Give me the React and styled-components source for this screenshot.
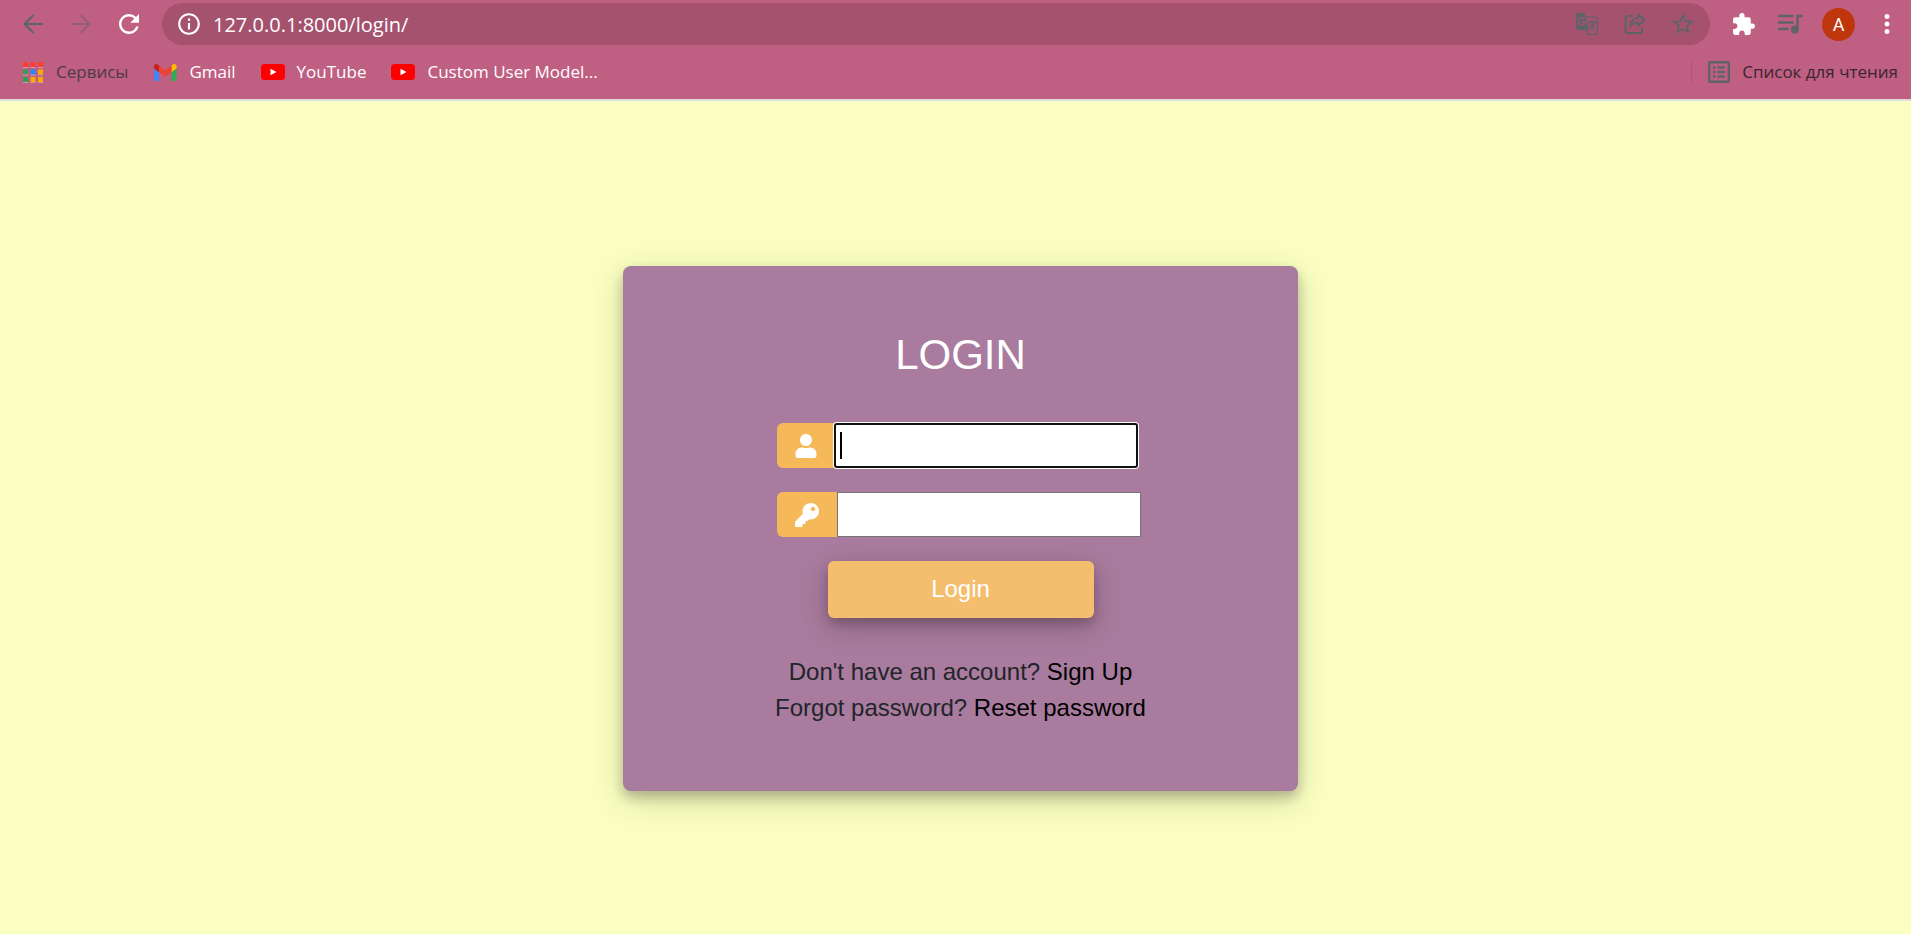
import React from "react";
import styled, { createGlobalStyle } from "styled-components";
import {
  MdRefresh,
  MdInfoOutline,
  MdStarOutline,
  MdExtension,
  MdMoreVert,
} from "react-icons/md";
import { FaUser, FaKey } from "react-icons/fa";

const GlobalStyle = createGlobalStyle`
  *, *::before, *::after { box-sizing: border-box; }
  body {
    margin: 0;
    background: #faffc1;
    font-family: "Liberation Sans", Arial, sans-serif;
  }
`;

const Page = styled.div`
  min-height: 100vh;
  display: flex;
  flex-direction: column;
`;

const Chrome = styled.header`
  background: #bf5f82;
  border-bottom: 2px solid #dedce0;
  padding-bottom: 3px;
  font-family: "Open Sans", "Noto Sans", sans-serif;
  color: #fff;
`;

const ToolBar = styled.div`
  display: flex;
  align-items: center;
  height: 48px;
  padding: 0 9px 0 18px;
`;

const IconButton = styled.button`
  display: flex;
  align-items: center;
  justify-content: center;
  flex: none;
  width: 30px;
  height: 30px;
  padding: 0;
  border: 0;
  background: none;
  color: ${(p) => p.$color || "#fff"};
`;

const NavButtons = styled.nav`
  display: flex;
  gap: 18px;
  margin-right: 18px;
`;

const AddressBar = styled.div`
  display: flex;
  align-items: center;
  flex: 1;
  height: 42px;
  padding: 0 12px;
  border-radius: 21px;
  background: #a5526f;
`;

const AddressInput = styled.input`
  flex: 1;
  min-width: 0;
  margin-left: 9px;
  padding: 0;
  border: 0;
  outline: 0;
  background: none;
  color: #fff;
  font: 20px "Open Sans", "Noto Sans", sans-serif;
`;

const AddressActions = styled.div`
  display: flex;
  gap: 18px;
`;

const BrowserActions = styled.div`
  display: flex;
  align-items: center;
  gap: 17px;
  margin-left: 18px;
`;

const Avatar = styled.button`
  width: 33px;
  height: 33px;
  padding: 0;
  border: 0;
  border-radius: 50%;
  background: #bf360c;
  color: #fff;
  font: 18px Roboto, sans-serif;
`;

const BookmarksBar = styled.nav`
  display: flex;
  align-items: center;
  gap: 25px;
  height: 48px;
  padding: 0 13px 0 22px;
`;

const Bookmark = styled.a`
  display: flex;
  align-items: center;
  gap: 12px;
  color: ${(p) => p.$color || "#fff"};
  font-size: 17px;
  line-height: 24px;
  text-decoration: none;
  white-space: nowrap;
`;

const ReadingList = styled.div`
  display: flex;
  margin-left: auto;
  padding-left: 16px;
  border-left: 1px solid #ad5a78;
`;

const Main = styled.main`
  display: flex;
  flex: 1;
  justify-content: center;
  align-items: flex-start;
  padding: 165px 0 24px 10px;
`;

const Card = styled.section`
  display: flex;
  flex-direction: column;
  align-items: center;
  width: 675px;
  max-width: 100%;
  padding: 63px 24px 65px;
  border-radius: 8px;
  background: #a97b9e;
  box-shadow: 0 6px 12px rgba(0, 0, 0, 0.2), 0 9px 30px rgba(0, 0, 0, 0.19);
`;

const Title = styled.h1`
  margin: 0 0 43px;
  color: #fff;
  font-size: 42px;
  font-weight: 400;
  line-height: 51px;
`;

const Form = styled.form`
  display: flex;
  flex-direction: column;
  gap: 24px;
  width: 367px;
`;

const Field = styled.div`
  display: flex;
  height: 45px;
`;

const FieldIcon = styled.label`
  display: flex;
  align-items: center;
  justify-content: center;
  flex: none;
  width: ${(p) => p.$width}px;
  border-radius: 6px 0 0 6px;
  background: #f6b95a;
  color: #fff;
`;

const InputWrap = styled.div`
  position: relative;
  width: 304px;
`;

const TextInput = styled.input`
  width: 100%;
  height: 100%;
  padding: 0 4px;
  border: 1px solid #767676;
  border-radius: 0;
  outline: 0;
  background: #fff;
  caret-color: transparent;
  font: 24px "Liberation Sans", Arial, sans-serif;

  &:focus {
    border: 2px solid #101010;
    border-radius: 3px;
    box-shadow: 0 0 0 1px #fff;
  }
`;

const Caret = styled.span`
  position: absolute;
  top: 9px;
  left: 6px;
  width: 2px;
  height: 27px;
  background: #000;
`;

const SubmitButton = styled.button`
  align-self: center;
  width: 266px;
  height: 57px;
  padding: 0 0 1px;
  border: 0;
  border-radius: 6px;
  background: #f5be6e;
  color: #fff;
  font: 24px "Liberation Sans", Arial, sans-serif;
  box-shadow: 0 6px 12px rgba(0, 0, 0, 0.2), 0 9px 30px rgba(0, 0, 0, 0.19);
`;

const Prompts = styled.div`
  margin-top: 36px;
  color: #212529;
  font-size: 24px;
  line-height: 36px;
  text-align: center;
`;

const Prompt = styled.p`
  margin: 0;
`;

const PromptLink = styled.a`
  color: #000;
  text-decoration: none;
`;

const ArrowIcon = ({ forward }) => (
  <svg width="20" height="20" viewBox="0 0 20 20" fill="none" stroke="currentColor" strokeWidth="2.2">
    <path d={forward ? "M0 10H18.5M9.5 1L18.5 10L9.5 19" : "M20 10H1.5M10.5 1L1.5 10L10.5 19"} />
  </svg>
);

const TranslateIcon = () => (
  <svg width="22" height="22" viewBox="0 0 22 22">
    <path d="M2 0H8.500L13 17H2Q0 17 0 15V2Q0 0 2 0Z" fill="#5f6368" />
    <path d="M10 4H19.500Q21.400 4 21.400 6V19.500Q21.400 21.400 19.500 21.400H12L10.500 17" fill="none" stroke="#5f6368" strokeWidth="1.200" />
    <path d="M8 6.200A3.400 3.400 0 1 0 8.800 9H6" fill="none" stroke="#a5526f" strokeWidth="1.400" />
    <path d="M12 9H19.500M15.700 7.500V9M18.300 9Q17.500 12.500 13.500 16M14 10.500Q15.500 14 19 16.500" fill="none" stroke="#5f6368" strokeWidth="1.300" />
  </svg>
);

const ShareIcon = () => (
  <svg width="22" height="22" viewBox="0 0 22 22" fill="none" stroke="#5f6368" strokeWidth="2" strokeLinejoin="round">
    <path d="M9 3H4Q1.500 3 1.500 5.500V17.500Q1.500 20 4 20H15.500Q18 20 18 17.500V15" />
    <path d="M14 1.500L20.500 7L14 12.500V9.500Q9 9.500 6 13.500Q7 5.500 14 4.800Z" />
  </svg>
);

const QueueIcon = () => (
  <svg width="25" height="20" viewBox="0 0 25 20" fill="none" stroke="currentColor" strokeWidth="2.300">
    <path d="M0 2H15.500M0 8.500H15.500M0 15H10.500M19.500 15V2H24.500" />
    <circle cx="16.800" cy="15.500" r="3.900" fill="currentColor" stroke="none" />
  </svg>
);

const ListIcon = () => (
  <svg width="22" height="22" viewBox="0 0 22 22" fill="none" stroke="#5f6368" strokeWidth="2.400">
    <rect x="1.200" y="1.200" width="19.600" height="19.600" rx="1" />
    <path d="M5 6.500H7.500M9.500 6.500H17M5 11H7.500M9.500 11H17M5 15.500H7.500M9.500 15.500H17" />
  </svg>
);

const AppsIcon = () => {
  const rows = [
    ["#ff3d2e", "#ff3d2e", "#ff3d2e"],
    ["#34a04f", "#1a8cff", "#f9ab00"],
    ["#34a04f", "#f9ab00", "#f9ab00"],
  ];
  return (
    <svg width="22" height="22" viewBox="0 0 22 22">
      {rows.map((row, y) =>
        row.map((fill, x) => (
          <g key={`${x}-${y}`}>
            <rect x={1 + x * 7.5} y={1 + y * 7.5} width="5" height="5" fill={fill} />
            <rect x={1 + x * 7.5} y={6 + y * 7.5} width="5" height="1" fill="#d19bae" />
          </g>
        ))
      )}
    </svg>
  );
};

const GmailIcon = () => (
  <svg width="24" height="17" viewBox="50 42 90 66">
    <path fill="#4285f4" d="M58 108h14V74L52 59v43c0 3.320 2.690 6 6 6" />
    <path fill="#34a853" d="M120 108h14c3.320 0 6-2.690 6-6V59l-20 15" />
    <path fill="#fbbc04" d="M120 48v26l20-15v-8c0-7.420-8.470-11.650-14.400-7.200" />
    <path fill="#ea4335" d="M72 74V48l24 18 24-18v26L96 92" />
    <path fill="#c5221f" d="M52 51v8l20 15V48l-5.600-4.200c-5.940-4.450-14.400-.220-14.400 7.200" />
  </svg>
);

const YouTubeIcon = () => (
  <svg width="24" height="16" viewBox="0 0 24 16">
    <rect width="24" height="16" rx="3.500" fill="#f00" />
    <path d="M9.500 4.800L15.500 8L9.500 11.200Z" fill="#fff" />
  </svg>
);

export default function App() {
  return (
    <Page>
      <GlobalStyle />
      <Chrome>
        <ToolBar>
          <NavButtons aria-label="Navigation">
            <IconButton $color="#5f6368" aria-label="Back"><ArrowIcon /></IconButton>
            <IconButton $color="#945f72" aria-label="Forward"><ArrowIcon forward /></IconButton>
            <IconButton aria-label="Reload"><MdRefresh size={30} /></IconButton>
          </NavButtons>
          <AddressBar>
            <IconButton aria-label="Site information"><MdInfoOutline size={26} /></IconButton>
            <AddressInput aria-label="Address" defaultValue="127.0.0.1:8000/login/" />
            <AddressActions>
              <IconButton aria-label="Translate"><TranslateIcon /></IconButton>
              <IconButton aria-label="Share"><ShareIcon /></IconButton>
              <IconButton $color="#5f6368" aria-label="Bookmark"><MdStarOutline size={26} /></IconButton>
            </AddressActions>
          </AddressBar>
          <BrowserActions>
            <IconButton aria-label="Extensions"><MdExtension size={25} /></IconButton>
            <IconButton $color="#5f6368" aria-label="Media"><QueueIcon /></IconButton>
            <Avatar aria-label="Profile">A</Avatar>
            <IconButton aria-label="Menu"><MdMoreVert size={30} /></IconButton>
          </BrowserActions>
        </ToolBar>
        <BookmarksBar aria-label="Bookmarks">
          <Bookmark href="#" $color="#4c3b45"><AppsIcon />Сервисы</Bookmark>
          <Bookmark href="#"><GmailIcon />Gmail</Bookmark>
          <Bookmark href="#"><YouTubeIcon />YouTube</Bookmark>
          <Bookmark href="#"><YouTubeIcon />Custom User Model...</Bookmark>
          <ReadingList>
            <Bookmark href="#" $color="#3a2530"><ListIcon />Список для чтения</Bookmark>
          </ReadingList>
        </BookmarksBar>
      </Chrome>
      <Main>
        <Card>
          <Title>LOGIN</Title>
          <Form onSubmit={(e) => e.preventDefault()}>
            <Field>
              <FieldIcon $width={57} htmlFor="username" aria-label="Username"><FaUser size={24} /></FieldIcon>
              <InputWrap>
                <TextInput id="username" type="text" autoFocus />
                <Caret />
              </InputWrap>
            </Field>
            <Field>
              <FieldIcon $width={60} htmlFor="password" aria-label="Password"><FaKey size={24} /></FieldIcon>
              <InputWrap>
                <TextInput id="password" type="password" />
              </InputWrap>
            </Field>
            <SubmitButton type="submit">Login</SubmitButton>
          </Form>
          <Prompts>
            <Prompt>Don't have an account? <PromptLink href="#">Sign Up</PromptLink></Prompt>
            <Prompt>Forgot password? <PromptLink href="#">Reset password</PromptLink></Prompt>
          </Prompts>
        </Card>
      </Main>
    </Page>
  );
}
